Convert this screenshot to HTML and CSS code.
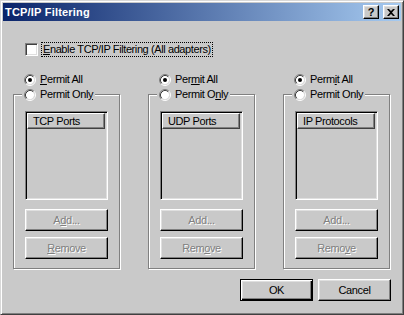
FILE: index.html
```html
<!DOCTYPE html>
<html>
<head>
<meta charset="utf-8">
<link rel="stylesheet" href="styles.css">
</head>
<body>
<div class="window">
  <div class="titlebar">
    <span class="title">TCP/IP Filtering</span>
    <div class="tbtns">
      <span class="tbtn help">?</span>
      <span class="tbtn close"><svg width="8" height="7" viewBox="0 0 8 7"><path d="M0 0h2l2 2 2-2h2L5 3.5 8 7H6L4 5 2 7H0l3-3.5z" fill="#000"/></svg></span>
    </div>
  </div>
  <div class="content">
    <div class="enable-row">
      <span class="check"></span>
      <span class="focus"><u>E</u>nable TCP/IP Filtering (All adapters)</span>
    </div>
    <div class="groups">
      <div class="col">
        <div class="radio-row"><svg class="radio" width="12" height="12" viewBox="0 0 12 12"><circle cx="6" cy="6" r="4.2" fill="#fff"/><path d="M2.11 9.89A5.5 5.5 0 0 1 9.89 2.11" stroke="#808080" fill="none"/><path d="M9.89 2.11A5.5 5.5 0 0 1 2.11 9.89" stroke="#fff" fill="none"/><path d="M2.82 9.18A4.5 4.5 0 0 1 9.18 2.82" stroke="#404040" fill="none"/><path d="M9.18 2.82A4.5 4.5 0 0 1 2.82 9.18" stroke="#dfdfdf" fill="none"/><circle cx="6" cy="6" r="2" fill="#000"/></svg><span><u>P</u>ermit All</span></div>
        <div class="group">
          <div class="legend"><svg class="radio" width="12" height="12" viewBox="0 0 12 12"><circle cx="6" cy="6" r="4.2" fill="#fff"/><path d="M2.11 9.89A5.5 5.5 0 0 1 9.89 2.11" stroke="#808080" fill="none"/><path d="M9.89 2.11A5.5 5.5 0 0 1 2.11 9.89" stroke="#fff" fill="none"/><path d="M2.82 9.18A4.5 4.5 0 0 1 9.18 2.82" stroke="#404040" fill="none"/><path d="M9.18 2.82A4.5 4.5 0 0 1 2.82 9.18" stroke="#dfdfdf" fill="none"/></svg><span>Permit Onl<u>y</u></span></div>
          <div class="list"><div class="header">TCP Ports</div></div>
          <div class="btn disabled add">A<u>d</u>d...</div>
          <div class="btn disabled remove"><u>R</u>emove</div>
        </div>
      </div>
      <div class="col">
        <div class="radio-row"><svg class="radio" width="12" height="12" viewBox="0 0 12 12"><circle cx="6" cy="6" r="4.2" fill="#fff"/><path d="M2.11 9.89A5.5 5.5 0 0 1 9.89 2.11" stroke="#808080" fill="none"/><path d="M9.89 2.11A5.5 5.5 0 0 1 2.11 9.89" stroke="#fff" fill="none"/><path d="M2.82 9.18A4.5 4.5 0 0 1 9.18 2.82" stroke="#404040" fill="none"/><path d="M9.18 2.82A4.5 4.5 0 0 1 2.82 9.18" stroke="#dfdfdf" fill="none"/><circle cx="6" cy="6" r="2" fill="#000"/></svg><span>Per<u>m</u>it All</span></div>
        <div class="group">
          <div class="legend"><svg class="radio" width="12" height="12" viewBox="0 0 12 12"><circle cx="6" cy="6" r="4.2" fill="#fff"/><path d="M2.11 9.89A5.5 5.5 0 0 1 9.89 2.11" stroke="#808080" fill="none"/><path d="M9.89 2.11A5.5 5.5 0 0 1 2.11 9.89" stroke="#fff" fill="none"/><path d="M2.82 9.18A4.5 4.5 0 0 1 9.18 2.82" stroke="#404040" fill="none"/><path d="M9.18 2.82A4.5 4.5 0 0 1 2.82 9.18" stroke="#dfdfdf" fill="none"/></svg><span>Permit O<u>n</u>ly</span></div>
          <div class="list"><div class="header">UDP Ports</div></div>
          <div class="btn disabled add">Add...</div>
          <div class="btn disabled remove">Rem<u>o</u>ve</div>
        </div>
      </div>
      <div class="col">
        <div class="radio-row"><svg class="radio" width="12" height="12" viewBox="0 0 12 12"><circle cx="6" cy="6" r="4.2" fill="#fff"/><path d="M2.11 9.89A5.5 5.5 0 0 1 9.89 2.11" stroke="#808080" fill="none"/><path d="M9.89 2.11A5.5 5.5 0 0 1 2.11 9.89" stroke="#fff" fill="none"/><path d="M2.82 9.18A4.5 4.5 0 0 1 9.18 2.82" stroke="#404040" fill="none"/><path d="M9.18 2.82A4.5 4.5 0 0 1 2.82 9.18" stroke="#dfdfdf" fill="none"/><circle cx="6" cy="6" r="2" fill="#000"/></svg><span>Perm<u>i</u>t All</span></div>
        <div class="group">
          <div class="legend"><svg class="radio" width="12" height="12" viewBox="0 0 12 12"><circle cx="6" cy="6" r="4.2" fill="#fff"/><path d="M2.11 9.89A5.5 5.5 0 0 1 9.89 2.11" stroke="#808080" fill="none"/><path d="M9.89 2.11A5.5 5.5 0 0 1 2.11 9.89" stroke="#fff" fill="none"/><path d="M2.82 9.18A4.5 4.5 0 0 1 9.18 2.82" stroke="#404040" fill="none"/><path d="M9.18 2.82A4.5 4.5 0 0 1 2.82 9.18" stroke="#dfdfdf" fill="none"/></svg><span>Permit Only</span></div>
          <div class="list"><div class="header">IP Protocols</div></div>
          <div class="btn disabled add">Add...</div>
          <div class="btn disabled remove">Remo<u>v</u>e</div>
        </div>
      </div>
    </div>
    <div class="footer">
      <div class="btn default">OK</div>
      <div class="btn">Cancel</div>
    </div>
  </div>
</div>
</body>
</html>
```
FILE: styles.css
```css
html, body {
  margin: 0;
  padding: 0;
  background: #c9c9c9;
}
body {
  font-family: "Liberation Sans", Arial, sans-serif;
  font-size: 11px;
  letter-spacing: -0.4px;
  color: #000;
}
u { text-decoration: underline; text-underline-offset: 1px; }

.window {
  width: 404px;
  height: 315px;
  box-sizing: border-box;
  background: #c9c9c9;
  border: 1px solid;
  border-color: #d8d8d8 #404040 #404040 #d8d8d8;
  box-shadow: inset 1px 1px #fff, inset -1px -1px #808080;
  padding: 2px;
}

.titlebar {
  height: 18px;
  display: flex;
  align-items: center;
  justify-content: space-between;
  background: linear-gradient(to right, #0a246a, #a6caf0);
  padding: 0 2px 0 2px;
}
.title {
  color: #fff;
  font-weight: bold;
  letter-spacing: 0.2px;
  line-height: 18px;
}
.tbtns { display: flex; gap: 2px; }
.tbtn {
  width: 16px;
  height: 14px;
  box-sizing: border-box;
  background: #c9c9c9;
  border: 1px solid;
  border-color: #fff #000 #000 #fff;
  box-shadow: inset -1px -1px #808080, inset 1px 1px #dfdfdf;
  display: flex;
  align-items: center;
  justify-content: center;
  font-weight: bold;
  font-size: 11px;
  letter-spacing: 0;
  line-height: 12px;
}
.tbtn.help { margin-right: 2px; }

.content {
  padding: 0 0 0 10px;
}

.enable-row {
  display: flex;
  align-items: center;
  margin-top: 21px;
  margin-left: 12px;
}
.check {
  width: 13px;
  height: 13px;
  box-sizing: border-box;
  background: #fff;
  border: 1px solid;
  border-color: #808080 #fff #fff #808080;
  box-shadow: inset 1px 1px #404040, inset -1px -1px #dfdfdf;
}
.focus {
  margin-left: 3px;
  border: 1px dotted #000;
  padding: 0 1px;
  line-height: 13px;
}

.groups {
  display: grid;
  grid-template-columns: 107px 107px 107px;
  column-gap: 28px;
  margin-top: 16px;
}

.radio-row {
  display: flex;
  align-items: center;
  gap: 4px;
  margin-left: 11px;
  line-height: 13px;
}
.radio { display: block; flex: none; }

.group {
  margin-top: 8px;
  border: 1px solid #808080;
  box-shadow: inset 1px 1px #fff, 1px 1px #fff;
  padding: 0 11px 9px 11px;
}
.legend {
  display: flex;
  align-items: center;
  gap: 4px;
  width: fit-content;
  margin: -7px 0 0 -3px;
  padding: 0 2px;
  background: #c9c9c9;
  line-height: 13px;
}

.list {
  margin-top: 10px;
  height: 89px;
  box-sizing: border-box;
  border: 1px solid;
  border-color: #808080 #fff #fff #808080;
  box-shadow: inset 1px 1px #000, inset -1px -1px #dfdfdf;
  padding: 1px 2px 1px 1px;
}
.header {
  height: 16px;
  box-sizing: border-box;
  border: 1px solid;
  border-color: #fff #404040 #404040 #fff;
  box-shadow: inset -1px -1px #808080;
  padding-left: 5px;
  line-height: 14px;
}

.btn {
  height: 22px;
  box-sizing: border-box;
  border: 1px solid;
  border-color: #fff #000 #000 #fff;
  box-shadow: inset -1px -1px #808080, inset 1px 1px #dfdfdf;
  display: flex;
  align-items: center;
  justify-content: center;
  line-height: 13px;
}
.btn.add { margin-top: 9px; }
.btn.remove { margin-top: 6px; }
.btn.disabled {
  color: #808080;
  text-shadow: 1px 1px #fff;
}

.footer {
  display: flex;
  justify-content: flex-end;
  gap: 5px;
  margin-top: 10px;
  padding-right: 10px;
}
.footer .btn { width: 73px; }
.btn.default {
  border-color: #000;
  box-shadow: inset 1px 1px #fff, inset -1px -1px #000, inset -2px -2px #808080, inset 2px 2px #dfdfdf;
}
```
